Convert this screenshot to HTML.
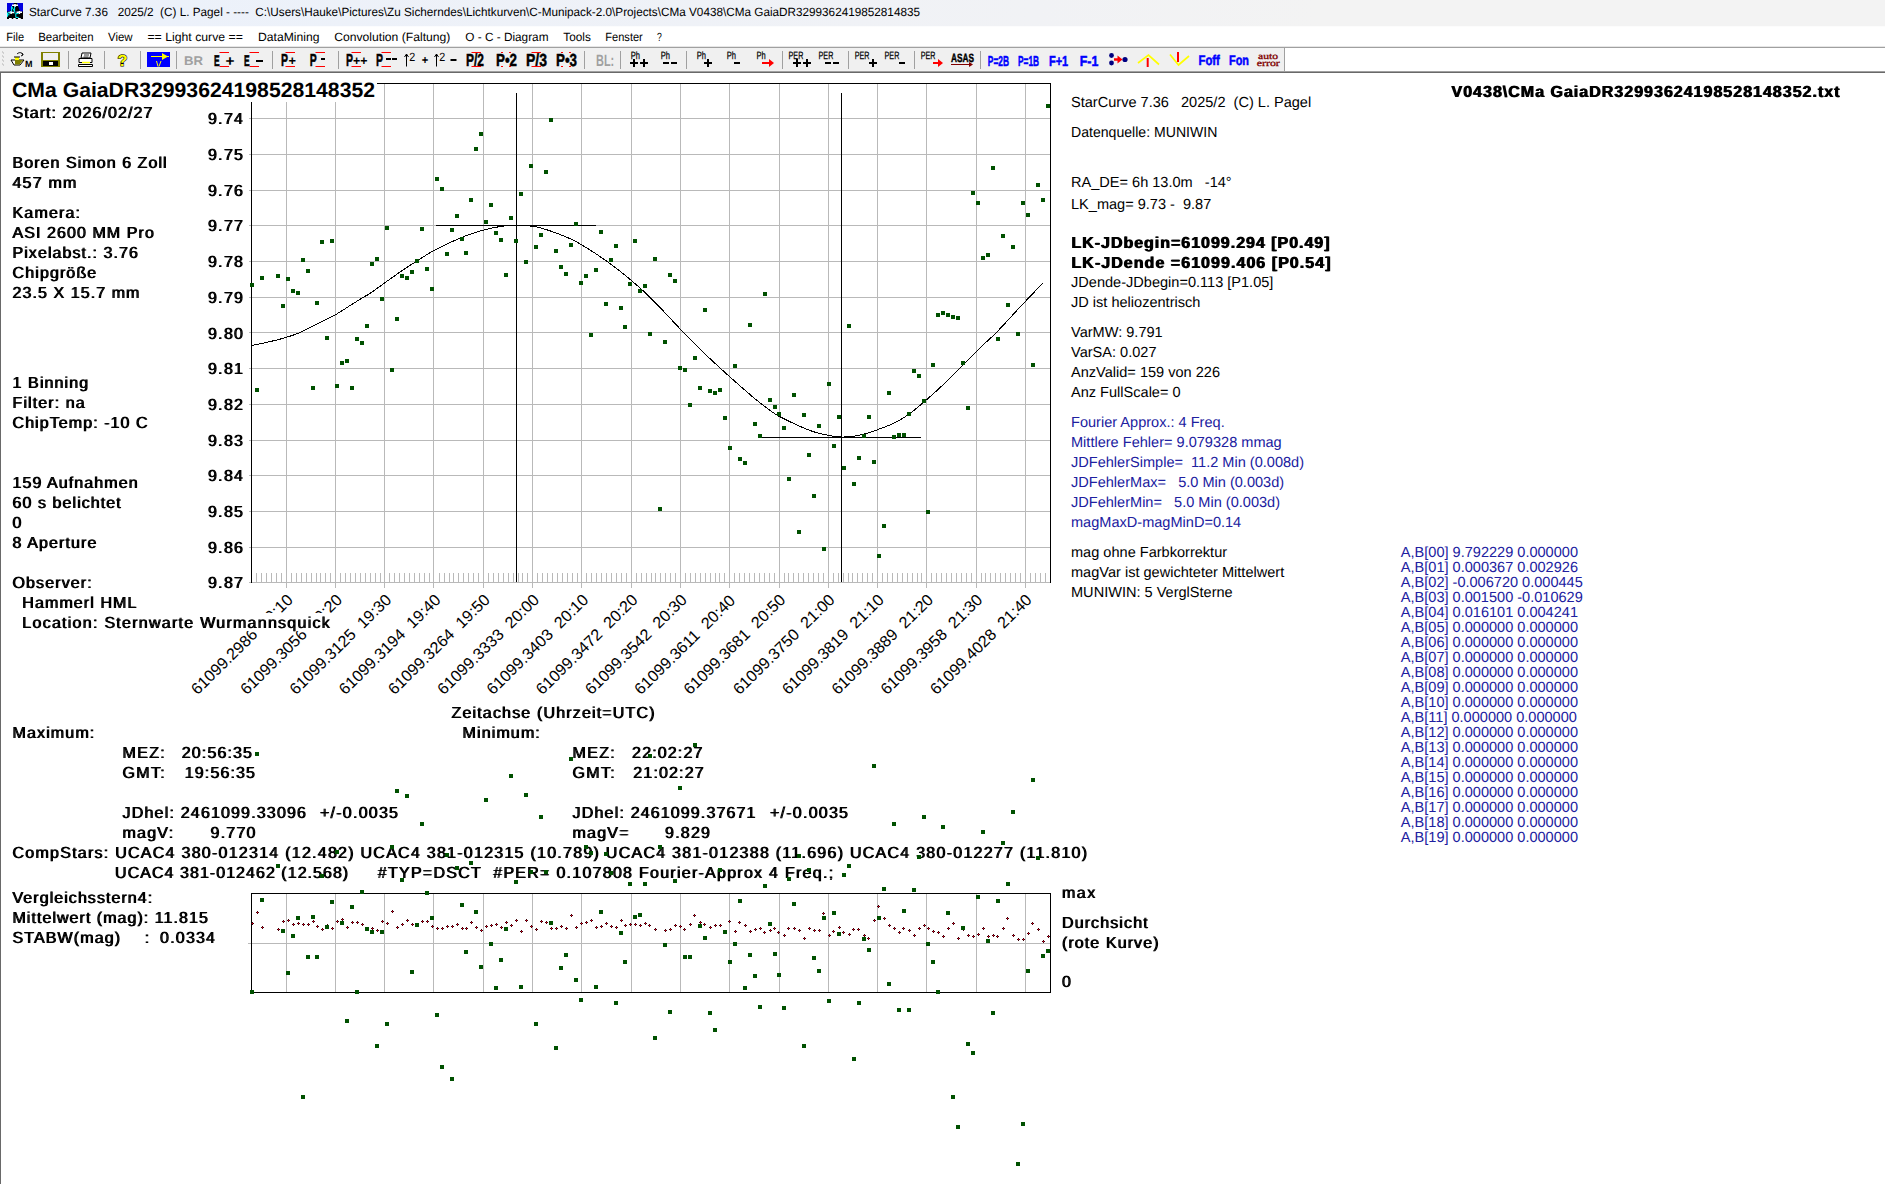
<!DOCTYPE html>
<html><head><meta charset="utf-8"><title>StarCurve</title>
<style>
html,body{margin:0;padding:0;background:#fff}
body{width:1885px;height:1184px;overflow:hidden;position:relative;font-family:"Liberation Sans",sans-serif}
svg text{font-family:"Liberation Sans",sans-serif;white-space:pre}
#main{position:absolute;left:0;top:0}
</style></head><body>
<svg id="main" width="1885" height="1184" viewBox="0 0 1885 1184" shape-rendering="crispEdges" text-rendering="geometricPrecision">
<defs><filter id="fb" filterUnits="userSpaceOnUse" x="0" y="0" width="1885" height="1184"><feOffset dx="0.7" dy="0" result="o"/><feMerge><feMergeNode in="SourceGraphic"/><feMergeNode in="o"/></feMerge></filter></defs>
<g shape-rendering="crispEdges">
<path d="M249 118.5H1050" stroke="#b9b9b9"/>
<path d="M249 154.5H1050" stroke="#b9b9b9"/>
<path d="M249 190.5H1050" stroke="#b9b9b9"/>
<path d="M249 225.5H1050" stroke="#b9b9b9"/>
<path d="M249 261.5H1050" stroke="#b9b9b9"/>
<path d="M249 297.5H1050" stroke="#b9b9b9"/>
<path d="M249 332.5H1050" stroke="#b9b9b9"/>
<path d="M249 368.5H1050" stroke="#b9b9b9"/>
<path d="M249 404.5H1050" stroke="#b9b9b9"/>
<path d="M249 440.5H1050" stroke="#b9b9b9"/>
<path d="M249 475.5H1050" stroke="#b9b9b9"/>
<path d="M249 511.5H1050" stroke="#b9b9b9"/>
<path d="M249 547.5H1050" stroke="#b9b9b9"/>
<path d="M249 582.5H1050" stroke="#b9b9b9"/>
<path d="M286.5 84V588" stroke="#b9b9b9"/>
<path d="M335.5 84V588" stroke="#b9b9b9"/>
<path d="M384.5 84V588" stroke="#b9b9b9"/>
<path d="M433.5 84V588" stroke="#b9b9b9"/>
<path d="M483.5 84V588" stroke="#b9b9b9"/>
<path d="M532.5 84V588" stroke="#b9b9b9"/>
<path d="M581.5 84V588" stroke="#b9b9b9"/>
<path d="M631.5 84V588" stroke="#b9b9b9"/>
<path d="M680.5 84V588" stroke="#b9b9b9"/>
<path d="M729.5 84V588" stroke="#b9b9b9"/>
<path d="M779.5 84V588" stroke="#b9b9b9"/>
<path d="M828.5 84V588" stroke="#b9b9b9"/>
<path d="M877.5 84V588" stroke="#b9b9b9"/>
<path d="M926.5 84V588" stroke="#b9b9b9"/>
<path d="M976.5 84V588" stroke="#b9b9b9"/>
<path d="M1025.5 84V588" stroke="#b9b9b9"/>
<path d="M256.5 573V582M261.5 573V582M266.5 573V582M271.5 573V582M276.5 573V582M281.5 573V582M291.5 573V582M296.5 573V582M301.5 573V582M306.5 573V582M311.5 573V582M316.5 573V582M320.5 573V582M325.5 573V582M330.5 573V582M340.5 573V582M345.5 573V582M350.5 573V582M355.5 573V582M360.5 573V582M365.5 573V582M370.5 573V582M375.5 573V582M380.5 573V582M389.5 573V582M394.5 573V582M399.5 573V582M404.5 573V582M409.5 573V582M414.5 573V582M419.5 573V582M424.5 573V582M429.5 573V582M439.5 573V582M444.5 573V582M449.5 573V582M453.5 573V582M458.5 573V582M463.5 573V582M468.5 573V582M473.5 573V582M478.5 573V582M488.5 573V582M493.5 573V582M498.5 573V582M503.5 573V582M508.5 573V582M513.5 573V582M518.5 573V582M522.5 573V582M527.5 573V582M537.5 573V582M542.5 573V582M547.5 573V582M552.5 573V582M557.5 573V582M562.5 573V582M567.5 573V582M572.5 573V582M577.5 573V582M586.5 573V582M591.5 573V582M596.5 573V582M601.5 573V582M606.5 573V582M611.5 573V582M616.5 573V582M621.5 573V582M626.5 573V582M636.5 573V582M641.5 573V582M646.5 573V582M651.5 573V582M655.5 573V582M660.5 573V582M665.5 573V582M670.5 573V582M675.5 573V582M685.5 573V582M690.5 573V582M695.5 573V582M700.5 573V582M705.5 573V582M710.5 573V582M715.5 573V582M719.5 573V582M724.5 573V582M734.5 573V582M739.5 573V582M744.5 573V582M749.5 573V582M754.5 573V582M759.5 573V582M764.5 573V582M769.5 573V582M774.5 573V582M784.5 573V582M788.5 573V582M793.5 573V582M798.5 573V582M803.5 573V582M808.5 573V582M813.5 573V582M818.5 573V582M823.5 573V582M833.5 573V582M838.5 573V582M843.5 573V582M848.5 573V582M852.5 573V582M857.5 573V582M862.5 573V582M867.5 573V582M872.5 573V582M882.5 573V582M887.5 573V582M892.5 573V582M897.5 573V582M902.5 573V582M907.5 573V582M912.5 573V582M917.5 573V582M921.5 573V582M931.5 573V582M936.5 573V582M941.5 573V582M946.5 573V582M951.5 573V582M956.5 573V582M961.5 573V582M966.5 573V582M971.5 573V582M981.5 573V582M985.5 573V582M990.5 573V582M995.5 573V582M1000.5 573V582M1005.5 573V582M1010.5 573V582M1015.5 573V582M1020.5 573V582M1030.5 573V582M1035.5 573V582M1040.5 573V582M1045.5 573V582" stroke="#b9b9b9"/>
<path d="M251.5 83V583" stroke="#000"/>
<path d="M251 83.5H1051" stroke="#000"/>
<path d="M1050.5 83V583" stroke="#000"/>
<path d="M516.5 93V582M436 225.5H596M841.5 93V582M760 437.5H921" stroke="#000"/>
<path d="M251.6 345.4C254.0 344.9 260.6 343.8 266.2 342.5C271.8 341.2 279.6 339.4 285.3 337.7C291.0 336.0 294.5 334.9 300.2 332.4C305.9 329.9 313.5 325.8 319.3 322.9C325.1 320.0 329.9 317.9 335.2 314.9C340.5 311.9 346.2 308.0 351.1 304.9C356.1 301.8 361.4 298.5 364.9 296.4C368.4 294.3 365.8 296.3 372.0 292.0C378.2 287.8 391.6 277.7 401.9 270.8C412.2 263.9 423.8 256.2 433.8 250.6C443.8 245.1 453.7 240.7 462.0 237.3C470.3 233.8 476.9 231.9 483.4 230.1C489.9 228.3 495.3 227.3 500.8 226.4C506.4 225.6 512.6 225.3 516.7 225.2C520.9 225.0 521.8 225.1 525.9 225.6C529.9 226.1 533.4 225.7 540.9 227.9C548.4 230.2 561.7 234.7 570.8 239.0C580.0 243.3 587.5 248.3 595.9 253.8C604.2 259.3 611.9 264.6 620.9 271.9C629.9 279.1 639.5 287.1 650.0 297.3C660.5 307.5 675.1 323.8 684.0 333.0C692.8 342.1 697.2 346.4 703.1 352.1C708.9 357.8 713.7 362.1 719.0 367.0C724.3 371.8 728.9 376.1 734.9 381.4C740.9 386.7 748.7 393.6 755.0 398.8C761.4 404.0 769.1 409.7 773.1 412.6C777.1 415.5 774.8 414.0 779.0 416.2C783.3 418.4 792.8 423.2 798.5 425.7C804.3 428.3 808.3 430.0 813.4 431.7C818.5 433.3 824.2 434.6 828.9 435.5C833.6 436.4 837.3 436.8 841.4 437.0C845.5 437.1 849.1 437.0 853.7 436.3C858.3 435.6 864.8 433.9 869.0 432.7C873.2 431.5 874.8 430.7 879.0 429.1C883.1 427.5 889.0 425.7 894.0 423.2C899.0 420.7 903.9 417.8 908.9 414.3C913.9 410.7 918.3 406.8 924.0 402.0C929.6 397.1 936.3 391.2 942.8 385.0C949.3 378.8 956.6 371.2 963.0 364.8C969.4 358.5 975.6 352.1 981.0 346.8C986.5 341.5 989.5 339.5 995.9 333.0C1002.3 326.5 1011.4 316.3 1019.2 307.9C1027.1 299.6 1039.0 287.1 1043.0 282.9" stroke="#000" fill="none" stroke-width="1"/>
<path d="M286.5 894V992" stroke="#b9b9b9"/>
<path d="M335.5 894V992" stroke="#b9b9b9"/>
<path d="M384.5 894V992" stroke="#b9b9b9"/>
<path d="M433.5 894V992" stroke="#b9b9b9"/>
<path d="M483.5 894V992" stroke="#b9b9b9"/>
<path d="M532.5 894V992" stroke="#b9b9b9"/>
<path d="M581.5 894V992" stroke="#b9b9b9"/>
<path d="M631.5 894V992" stroke="#b9b9b9"/>
<path d="M680.5 894V992" stroke="#b9b9b9"/>
<path d="M729.5 894V992" stroke="#b9b9b9"/>
<path d="M779.5 894V992" stroke="#b9b9b9"/>
<path d="M828.5 894V992" stroke="#b9b9b9"/>
<path d="M877.5 894V992" stroke="#b9b9b9"/>
<path d="M926.5 894V992" stroke="#b9b9b9"/>
<path d="M976.5 894V992" stroke="#b9b9b9"/>
<path d="M1025.5 894V992" stroke="#b9b9b9"/>
<path d="M248 943.5H1050" stroke="#b9b9b9"/>
<rect x="251.5" y="893.5" width="799" height="99" fill="none" stroke="#000"/>
<text x="197.5" y="695.5" font-size="16" textLength="135.1" lengthAdjust="spacingAndGlyphs" transform="rotate(-44.5 197.5 695.5)">61099.2986  19:10</text>
<text x="246.8" y="695.5" font-size="16" textLength="135.1" lengthAdjust="spacingAndGlyphs" transform="rotate(-44.5 246.8 695.5)">61099.3056  19:20</text>
<text x="296.0" y="695.5" font-size="16" textLength="135.1" lengthAdjust="spacingAndGlyphs" transform="rotate(-44.5 296.0 695.5)">61099.3125  19:30</text>
<text x="345.3" y="695.5" font-size="16" textLength="135.1" lengthAdjust="spacingAndGlyphs" transform="rotate(-44.5 345.3 695.5)">61099.3194  19:40</text>
<text x="394.5" y="695.5" font-size="16" textLength="135.1" lengthAdjust="spacingAndGlyphs" transform="rotate(-44.5 394.5 695.5)">61099.3264  19:50</text>
<text x="443.8" y="695.5" font-size="16" textLength="135.1" lengthAdjust="spacingAndGlyphs" transform="rotate(-44.5 443.8 695.5)">61099.3333  20:00</text>
<text x="493.1" y="695.5" font-size="16" textLength="135.1" lengthAdjust="spacingAndGlyphs" transform="rotate(-44.5 493.1 695.5)">61099.3403  20:10</text>
<text x="542.3" y="695.5" font-size="16" textLength="135.1" lengthAdjust="spacingAndGlyphs" transform="rotate(-44.5 542.3 695.5)">61099.3472  20:20</text>
<text x="591.6" y="695.5" font-size="16" textLength="135.1" lengthAdjust="spacingAndGlyphs" transform="rotate(-44.5 591.6 695.5)">61099.3542  20:30</text>
<text x="640.8" y="695.5" font-size="16" textLength="133.9" lengthAdjust="spacingAndGlyphs" transform="rotate(-44.5 640.8 695.5)">61099.3611  20:40</text>
<text x="690.1" y="695.5" font-size="16" textLength="135.1" lengthAdjust="spacingAndGlyphs" transform="rotate(-44.5 690.1 695.5)">61099.3681  20:50</text>
<text x="739.4" y="695.5" font-size="16" textLength="135.1" lengthAdjust="spacingAndGlyphs" transform="rotate(-44.5 739.4 695.5)">61099.3750  21:00</text>
<text x="788.6" y="695.5" font-size="16" textLength="135.1" lengthAdjust="spacingAndGlyphs" transform="rotate(-44.5 788.6 695.5)">61099.3819  21:10</text>
<text x="837.9" y="695.5" font-size="16" textLength="135.1" lengthAdjust="spacingAndGlyphs" transform="rotate(-44.5 837.9 695.5)">61099.3889  21:20</text>
<text x="887.1" y="695.5" font-size="16" textLength="135.1" lengthAdjust="spacingAndGlyphs" transform="rotate(-44.5 887.1 695.5)">61099.3958  21:30</text>
<text x="936.4" y="695.5" font-size="16" textLength="135.1" lengthAdjust="spacingAndGlyphs" transform="rotate(-44.5 936.4 695.5)">61099.4028  21:40</text>
<rect x="12" y="573" width="88" height="20" fill="#fff"/>
<rect x="21" y="593" width="120" height="20" fill="#fff"/>
<rect x="21" y="613" width="310" height="17.5" fill="#fff"/>
<rect x="12" y="76" width="365" height="26" fill="#fff"/>
<text x="12.0" y="97.0" font-size="20.7" textLength="363.0" lengthAdjust="spacingAndGlyphs" font-weight="bold">CMa GaiaDR32993624198528148352</text>
<text x="1071.0" y="107.0" font-size="14.6" textLength="240.2" lengthAdjust="spacingAndGlyphs">StarCurve 7.36   2025/2  (C) L. Pagel</text>
<text x="1071.0" y="137.0" font-size="14.6" textLength="146.4" lengthAdjust="spacingAndGlyphs">Datenquelle: MUNIWIN</text>
<text x="1071.0" y="187.0" font-size="14.6" textLength="160.7" lengthAdjust="spacingAndGlyphs">RA_DE= 6h 13.0m   -14°</text>
<text x="1071.0" y="208.5" font-size="14.6" textLength="140.3" lengthAdjust="spacingAndGlyphs">LK_mag= 9.73 -  9.87</text>
<text x="1071.0" y="287.0" font-size="14.6" textLength="202.4" lengthAdjust="spacingAndGlyphs">JDende-JDbegin=0.113 [P1.05]</text>
<text x="1071.0" y="307.0" font-size="14.6" textLength="129.4" lengthAdjust="spacingAndGlyphs">JD ist heliozentrisch</text>
<text x="1071.0" y="337.0" font-size="14.6" textLength="91.7" lengthAdjust="spacingAndGlyphs">VarMW: 9.791</text>
<text x="1071.0" y="357.0" font-size="14.6" textLength="85.5" lengthAdjust="spacingAndGlyphs">VarSA: 0.027</text>
<text x="1071.0" y="377.0" font-size="14.6" textLength="149.0" lengthAdjust="spacingAndGlyphs">AnzValid= 159 von 226</text>
<text x="1071.0" y="397.0" font-size="14.6" textLength="109.6" lengthAdjust="spacingAndGlyphs">Anz FullScale= 0</text>
<text x="1071.0" y="557.0" font-size="14.6" textLength="156.1" lengthAdjust="spacingAndGlyphs">mag ohne Farbkorrektur</text>
<text x="1071.0" y="577.0" font-size="14.6" textLength="213.2" lengthAdjust="spacingAndGlyphs">magVar ist gewichteter Mittelwert</text>
<text x="1071.0" y="597.0" font-size="14.6" textLength="161.7" lengthAdjust="spacingAndGlyphs">MUNIWIN: 5 VerglSterne</text>
<text x="1071.0" y="427.0" font-size="14.6" textLength="153.7" lengthAdjust="spacingAndGlyphs" fill="#2020a0">Fourier Approx.: 4 Freq.</text>
<text x="1071.0" y="447.0" font-size="14.6" textLength="210.7" lengthAdjust="spacingAndGlyphs" fill="#2020a0">Mittlere Fehler= 9.079328 mmag</text>
<text x="1071.0" y="467.0" font-size="14.6" textLength="233.0" lengthAdjust="spacingAndGlyphs" fill="#2020a0">JDFehlerSimple=  11.2 Min (0.008d)</text>
<text x="1071.0" y="487.0" font-size="14.6" textLength="213.1" lengthAdjust="spacingAndGlyphs" fill="#2020a0">JDFehlerMax=   5.0 Min (0.003d)</text>
<text x="1071.0" y="507.0" font-size="14.6" textLength="209.0" lengthAdjust="spacingAndGlyphs" fill="#2020a0">JDFehlerMin=   5.0 Min (0.003d)</text>
<text x="1071.0" y="527.0" font-size="14.6" textLength="170.2" lengthAdjust="spacingAndGlyphs" fill="#2020a0">magMaxD-magMinD=0.14</text>
<text x="1400.8" y="557.0" font-size="14.6" textLength="177.2" lengthAdjust="spacingAndGlyphs" fill="#2020a0">A,B[00] 9.792229 0.000000</text>
<text x="1400.8" y="572.0" font-size="14.6" textLength="177.2" lengthAdjust="spacingAndGlyphs" fill="#2020a0">A,B[01] 0.000367 0.002926</text>
<text x="1400.8" y="587.0" font-size="14.6" textLength="182.0" lengthAdjust="spacingAndGlyphs" fill="#2020a0">A,B[02] -0.006720 0.000445</text>
<text x="1400.8" y="602.0" font-size="14.6" textLength="182.0" lengthAdjust="spacingAndGlyphs" fill="#2020a0">A,B[03] 0.001500 -0.010629</text>
<text x="1400.8" y="617.0" font-size="14.6" textLength="177.2" lengthAdjust="spacingAndGlyphs" fill="#2020a0">A,B[04] 0.016101 0.004241</text>
<text x="1400.8" y="632.0" font-size="14.6" textLength="177.2" lengthAdjust="spacingAndGlyphs" fill="#2020a0">A,B[05] 0.000000 0.000000</text>
<text x="1400.8" y="647.0" font-size="14.6" textLength="177.2" lengthAdjust="spacingAndGlyphs" fill="#2020a0">A,B[06] 0.000000 0.000000</text>
<text x="1400.8" y="662.0" font-size="14.6" textLength="177.2" lengthAdjust="spacingAndGlyphs" fill="#2020a0">A,B[07] 0.000000 0.000000</text>
<text x="1400.8" y="677.0" font-size="14.6" textLength="177.2" lengthAdjust="spacingAndGlyphs" fill="#2020a0">A,B[08] 0.000000 0.000000</text>
<text x="1400.8" y="692.0" font-size="14.6" textLength="177.2" lengthAdjust="spacingAndGlyphs" fill="#2020a0">A,B[09] 0.000000 0.000000</text>
<text x="1400.8" y="707.0" font-size="14.6" textLength="177.2" lengthAdjust="spacingAndGlyphs" fill="#2020a0">A,B[10] 0.000000 0.000000</text>
<text x="1400.8" y="722.0" font-size="14.6" textLength="176.1" lengthAdjust="spacingAndGlyphs" fill="#2020a0">A,B[11] 0.000000 0.000000</text>
<text x="1400.8" y="737.0" font-size="14.6" textLength="177.2" lengthAdjust="spacingAndGlyphs" fill="#2020a0">A,B[12] 0.000000 0.000000</text>
<text x="1400.8" y="752.0" font-size="14.6" textLength="177.2" lengthAdjust="spacingAndGlyphs" fill="#2020a0">A,B[13] 0.000000 0.000000</text>
<text x="1400.8" y="767.0" font-size="14.6" textLength="177.2" lengthAdjust="spacingAndGlyphs" fill="#2020a0">A,B[14] 0.000000 0.000000</text>
<text x="1400.8" y="782.0" font-size="14.6" textLength="177.2" lengthAdjust="spacingAndGlyphs" fill="#2020a0">A,B[15] 0.000000 0.000000</text>
<text x="1400.8" y="797.0" font-size="14.6" textLength="177.2" lengthAdjust="spacingAndGlyphs" fill="#2020a0">A,B[16] 0.000000 0.000000</text>
<text x="1400.8" y="812.0" font-size="14.6" textLength="177.2" lengthAdjust="spacingAndGlyphs" fill="#2020a0">A,B[17] 0.000000 0.000000</text>
<text x="1400.8" y="827.0" font-size="14.6" textLength="177.2" lengthAdjust="spacingAndGlyphs" fill="#2020a0">A,B[18] 0.000000 0.000000</text>
<text x="1400.8" y="842.0" font-size="14.6" textLength="177.2" lengthAdjust="spacingAndGlyphs" fill="#2020a0">A,B[19] 0.000000 0.000000</text>
<g filter="url(#fb)">
<text x="1451.0" y="97.0" font-size="16" textLength="388.0" lengthAdjust="spacing" font-weight="bold">V0438\CMa GaiaDR32993624198528148352.txt</text>
<text x="12.0" y="118.0" font-size="16" textLength="139.8" lengthAdjust="spacing">Start: 2026/02/27</text>
<text x="12.0" y="168.0" font-size="16" textLength="154.1" lengthAdjust="spacing">Boren Simon 6 Zoll</text>
<text x="12.0" y="188.0" font-size="16" textLength="63.8" lengthAdjust="spacing">457 mm</text>
<text x="12.0" y="218.0" font-size="16" textLength="67.5" lengthAdjust="spacing">Kamera:</text>
<text x="12.0" y="238.0" font-size="16" textLength="141.3" lengthAdjust="spacing">ASI 2600 MM Pro</text>
<text x="12.0" y="258.0" font-size="16" textLength="125.4" lengthAdjust="spacing">Pixelabst.: 3.76</text>
<text x="12.0" y="278.0" font-size="16" textLength="83.7" lengthAdjust="spacing">Chipgröße</text>
<text x="12.0" y="298.0" font-size="16" textLength="126.9" lengthAdjust="spacing">23.5 X 15.7 mm</text>
<text x="12.0" y="388.0" font-size="16" textLength="75.7" lengthAdjust="spacing">1 Binning</text>
<text x="12.0" y="408.0" font-size="16" textLength="72.2" lengthAdjust="spacing">Filter: na</text>
<text x="12.0" y="428.0" font-size="16" textLength="135.1" lengthAdjust="spacing">ChipTemp: -10 C</text>
<text x="12.0" y="488.0" font-size="16" textLength="125.1" lengthAdjust="spacing">159 Aufnahmen</text>
<text x="12.0" y="508.0" font-size="16" textLength="108.3" lengthAdjust="spacing">60 s belichtet</text>
<text x="12.0" y="528.0" font-size="16" textLength="9.9" lengthAdjust="spacing">0</text>
<text x="12.0" y="548.0" font-size="16" textLength="83.8" lengthAdjust="spacing">8 Aperture</text>
<text x="12.0" y="588.0" font-size="16" textLength="79.2" lengthAdjust="spacing">Observer:</text>
<text x="21.8" y="608.0" font-size="16" textLength="114.1" lengthAdjust="spacing">Hammerl HML</text>
<text x="21.8" y="628.0" font-size="16" textLength="307.5" lengthAdjust="spacing">Location: Sternwarte Wurmannsquick</text>
<text x="451.0" y="718.0" font-size="16" textLength="203.0" lengthAdjust="spacing">Zeitachse (Uhrzeit=UTC)</text>
<text x="12.0" y="738.0" font-size="16" textLength="81.8" lengthAdjust="spacing">Maximum:</text>
<text x="462.0" y="738.0" font-size="16" textLength="77.3" lengthAdjust="spacing">Minimum:</text>
<text x="122.0" y="758.0" font-size="16" textLength="42.2" lengthAdjust="spacing">MEZ:</text>
<text x="181.2" y="758.0" font-size="16" textLength="70.3" lengthAdjust="spacing">20:56:35</text>
<text x="122.0" y="778.0" font-size="16" textLength="42.2" lengthAdjust="spacing">GMT:</text>
<text x="184.2" y="778.0" font-size="16" textLength="70.3" lengthAdjust="spacing">19:56:35</text>
<text x="122.0" y="818.0" font-size="16" textLength="51.4" lengthAdjust="spacing">JDhel:</text>
<text x="180.3" y="818.0" font-size="16" textLength="125.1" lengthAdjust="spacing">2461099.33096</text>
<text x="319.4" y="818.0" font-size="16" textLength="78.1" lengthAdjust="spacing">+/-0.0035</text>
<text x="122.0" y="838.0" font-size="16" textLength="50.6" lengthAdjust="spacing">magV:</text>
<text x="210.0" y="838.0" font-size="16" textLength="45.0" lengthAdjust="spacing">9.770</text>
<text x="572.0" y="758.0" font-size="16" textLength="42.2" lengthAdjust="spacing">MEZ:</text>
<text x="631.6" y="758.0" font-size="16" textLength="70.3" lengthAdjust="spacing">22:02:27</text>
<text x="572.0" y="778.0" font-size="16" textLength="42.2" lengthAdjust="spacing">GMT:</text>
<text x="632.8" y="778.0" font-size="16" textLength="70.3" lengthAdjust="spacing">21:02:27</text>
<text x="572.0" y="818.0" font-size="16" textLength="51.4" lengthAdjust="spacing">JDhel:</text>
<text x="630.3" y="818.0" font-size="16" textLength="124.5" lengthAdjust="spacing">2461099.37671</text>
<text x="769.4" y="818.0" font-size="16" textLength="78.1" lengthAdjust="spacing">+/-0.0035</text>
<text x="572.0" y="838.0" font-size="16" textLength="56.1" lengthAdjust="spacing">magV=</text>
<text x="664.5" y="838.0" font-size="16" textLength="45.0" lengthAdjust="spacing">9.829</text>
<text x="12.0" y="858.0" font-size="16" textLength="1074.6" lengthAdjust="spacing">CompStars: UCAC4 380-012314 (12.482) UCAC4 381-012315 (10.789) UCAC4 381-012388 (11.696) UCAC4 380-012277 (11.810)</text>
<text x="114.6" y="878.0" font-size="16" textLength="233.1" lengthAdjust="spacing">UCAC4 381-012462 (12.568)</text>
<text x="377.3" y="878.0" font-size="16" textLength="455.3" lengthAdjust="spacing">#TYP=DSCT  #PER= 0.107808 Fourier-Approx 4 Freq.;</text>
<text x="12.0" y="903.0" font-size="16" textLength="139.7" lengthAdjust="spacing">Vergleichsstern4:</text>
<text x="12.0" y="923.0" font-size="16" textLength="195.3" lengthAdjust="spacing">Mittelwert (mag): 11.815</text>
<text x="12.0" y="943.0" font-size="16" textLength="107.5" lengthAdjust="spacing">STABW(mag)</text>
<text x="144.3" y="943.0" font-size="16" textLength="5.4" lengthAdjust="spacing">:</text>
<text x="159.6" y="943.0" font-size="16" textLength="54.9" lengthAdjust="spacing">0.0334</text>
<text x="1061.5" y="898.0" font-size="16" textLength="33.2" lengthAdjust="spacing">max</text>
<text x="1061.5" y="928.0" font-size="16" textLength="85.6" lengthAdjust="spacing">Durchsicht</text>
<text x="1061.5" y="948.0" font-size="16" textLength="96.5" lengthAdjust="spacing">(rote Kurve)</text>
<text x="1061.5" y="987.0" font-size="16" textLength="9.9" lengthAdjust="spacing">0</text>
<text x="207.4" y="124.3" font-size="16" textLength="35.1" lengthAdjust="spacing">9.74</text>
<text x="207.4" y="160.0" font-size="16" textLength="35.1" lengthAdjust="spacing">9.75</text>
<text x="207.4" y="195.7" font-size="16" textLength="35.1" lengthAdjust="spacing">9.76</text>
<text x="207.4" y="231.4" font-size="16" textLength="35.1" lengthAdjust="spacing">9.77</text>
<text x="207.4" y="267.1" font-size="16" textLength="35.1" lengthAdjust="spacing">9.78</text>
<text x="207.4" y="302.8" font-size="16" textLength="35.1" lengthAdjust="spacing">9.79</text>
<text x="207.4" y="338.5" font-size="16" textLength="35.1" lengthAdjust="spacing">9.80</text>
<text x="207.4" y="374.2" font-size="16" textLength="35.1" lengthAdjust="spacing">9.81</text>
<text x="207.4" y="409.9" font-size="16" textLength="35.1" lengthAdjust="spacing">9.82</text>
<text x="207.4" y="445.6" font-size="16" textLength="35.1" lengthAdjust="spacing">9.83</text>
<text x="207.4" y="481.3" font-size="16" textLength="35.1" lengthAdjust="spacing">9.84</text>
<text x="207.4" y="517.0" font-size="16" textLength="35.1" lengthAdjust="spacing">9.85</text>
<text x="207.4" y="552.7" font-size="16" textLength="35.1" lengthAdjust="spacing">9.86</text>
<text x="207.4" y="588.4" font-size="16" textLength="35.1" lengthAdjust="spacing">9.87</text>
<text x="1071.0" y="248.0" font-size="16" textLength="258.0" lengthAdjust="spacing" font-weight="bold">LK-JDbegin=61099.294 [P0.49]</text>
<text x="1071.0" y="267.5" font-size="16" textLength="259.0" lengthAdjust="spacing" font-weight="bold">LK-JDende =61099.406 [P0.54]</text>
</g>
<path d="M250 283h4v4h-4zM260 276h4v4h-4zM276 274h4v4h-4zM281 304h4v4h-4zM286 277h4v4h-4zM291 289h4v4h-4zM296 291h4v4h-4zM301 258h4v4h-4zM306 269h4v4h-4zM315 301h4v4h-4zM320 240h4v4h-4zM330 239h4v4h-4zM365 324h4v4h-4zM370 262h4v4h-4zM375 257h4v4h-4zM380 297h4v4h-4zM385 226h4v4h-4zM395 317h4v4h-4zM400 274h4v4h-4zM405 276h4v4h-4zM410 270h4v4h-4zM415 259h4v4h-4zM420 227h4v4h-4zM425 267h4v4h-4zM430 287h4v4h-4zM435 177h4v4h-4zM440 187h4v4h-4zM445 252h4v4h-4zM450 228h4v4h-4zM455 214h4v4h-4zM460 237h4v4h-4zM464 251h4v4h-4zM469 198h4v4h-4zM474 147h4v4h-4zM479 132h4v4h-4zM484 220h4v4h-4zM489 203h4v4h-4zM494 231h4v4h-4zM499 238h4v4h-4zM504 273h4v4h-4zM509 216h4v4h-4zM514 239h4v4h-4zM519 192h4v4h-4zM524 260h4v4h-4zM529 164h4v4h-4zM534 245h4v4h-4zM539 233h4v4h-4zM544 170h4v4h-4zM549 118h4v4h-4zM554 249h4v4h-4zM559 265h4v4h-4zM564 272h4v4h-4zM569 243h4v4h-4zM574 222h4v4h-4zM579 281h4v4h-4zM584 274h4v4h-4zM594 268h4v4h-4zM599 230h4v4h-4zM604 302h4v4h-4zM609 258h4v4h-4zM614 244h4v4h-4zM619 306h4v4h-4zM623 325h4v4h-4zM628 282h4v4h-4zM633 239h4v4h-4zM638 289h4v4h-4zM643 284h4v4h-4zM255 388h4v4h-4zM311 386h4v4h-4zM325 336h4v4h-4zM335 384h4v4h-4zM340 361h4v4h-4zM345 359h4v4h-4zM350 386h4v4h-4zM355 337h4v4h-4zM360 341h4v4h-4zM390 368h4v4h-4zM589 333h4v4h-4zM648 332h4v4h-4zM653 257h4v4h-4zM668 273h4v4h-4zM673 279h4v4h-4zM703 308h4v4h-4zM748 323h4v4h-4zM763 292h4v4h-4zM847 324h4v4h-4zM936 313h4v4h-4zM941 311h4v4h-4zM946 313h4v4h-4zM951 315h4v4h-4zM956 316h4v4h-4zM971 191h4v4h-4zM976 201h4v4h-4zM981 256h4v4h-4zM986 253h4v4h-4zM991 166h4v4h-4zM1001 234h4v4h-4zM1006 303h4v4h-4zM1011 245h4v4h-4zM1021 201h4v4h-4zM1026 213h4v4h-4zM1036 183h4v4h-4zM1041 198h4v4h-4zM1046 104h4v4h-4zM658 507h4v4h-4zM663 340h4v4h-4zM678 366h4v4h-4zM683 368h4v4h-4zM688 403h4v4h-4zM693 356h4v4h-4zM698 386h4v4h-4zM708 389h4v4h-4zM713 391h4v4h-4zM718 388h4v4h-4zM723 416h4v4h-4zM728 446h4v4h-4zM733 364h4v4h-4zM738 457h4v4h-4zM743 461h4v4h-4zM753 422h4v4h-4zM758 434h4v4h-4zM768 398h4v4h-4zM773 405h4v4h-4zM777 412h4v4h-4zM782 426h4v4h-4zM787 477h4v4h-4zM792 393h4v4h-4zM797 530h4v4h-4zM802 413h4v4h-4zM807 453h4v4h-4zM812 494h4v4h-4zM817 424h4v4h-4zM822 547h4v4h-4zM827 382h4v4h-4zM832 444h4v4h-4zM837 415h4v4h-4zM842 466h4v4h-4zM852 482h4v4h-4zM857 456h4v4h-4zM862 434h4v4h-4zM867 415h4v4h-4zM872 460h4v4h-4zM877 554h4v4h-4zM882 524h4v4h-4zM887 391h4v4h-4zM892 435h4v4h-4zM897 433h4v4h-4zM902 433h4v4h-4zM907 412h4v4h-4zM912 369h4v4h-4zM917 374h4v4h-4zM922 399h4v4h-4zM926 510h4v4h-4zM931 363h4v4h-4zM961 361h4v4h-4zM966 406h4v4h-4zM996 337h4v4h-4zM1016 332h4v4h-4zM1031 363h4v4h-4z" fill="#005000"/>
<path d="M251 923h3v1h-3zM252 922h1v3h-1zM256 912h3v1h-3zM257 911h1v3h-1zM261 927h3v1h-3zM262 926h1v3h-1zM277 929h3v1h-3zM278 928h1v3h-1zM282 921h3v1h-3zM283 920h1v3h-1zM287 920h3v1h-3zM288 919h1v3h-1zM292 924h3v1h-3zM293 923h1v3h-1zM297 923h3v1h-3zM298 922h1v3h-1zM302 924h3v1h-3zM303 923h1v3h-1zM307 924h3v1h-3zM308 923h1v3h-1zM312 921h3v1h-3zM313 920h1v3h-1zM316 926h3v1h-3zM317 925h1v3h-1zM321 929h3v1h-3zM322 928h1v3h-1zM326 925h3v1h-3zM327 924h1v3h-1zM331 928h3v1h-3zM332 927h1v3h-1zM336 921h3v1h-3zM337 920h1v3h-1zM341 919h3v1h-3zM342 918h1v3h-1zM346 927h3v1h-3zM347 926h1v3h-1zM351 922h3v1h-3zM352 921h1v3h-1zM356 922h3v1h-3zM357 921h1v3h-1zM361 924h3v1h-3zM362 923h1v3h-1zM366 928h3v1h-3zM367 927h1v3h-1zM371 928h3v1h-3zM372 927h1v3h-1zM376 930h3v1h-3zM377 929h1v3h-1zM381 921h3v1h-3zM382 920h1v3h-1zM386 923h3v1h-3zM387 922h1v3h-1zM391 911h3v1h-3zM392 910h1v3h-1zM396 927h3v1h-3zM397 926h1v3h-1zM401 924h3v1h-3zM402 923h1v3h-1zM406 920h3v1h-3zM407 919h1v3h-1zM411 924h3v1h-3zM412 923h1v3h-1zM416 924h3v1h-3zM417 923h1v3h-1zM421 921h3v1h-3zM422 920h1v3h-1zM426 921h3v1h-3zM427 920h1v3h-1zM431 926h3v1h-3zM432 925h1v3h-1zM436 928h3v1h-3zM437 927h1v3h-1zM441 928h3v1h-3zM442 927h1v3h-1zM446 926h3v1h-3zM447 925h1v3h-1zM451 926h3v1h-3zM452 925h1v3h-1zM456 924h3v1h-3zM457 923h1v3h-1zM461 928h3v1h-3zM462 927h1v3h-1zM465 928h3v1h-3zM466 927h1v3h-1zM470 922h3v1h-3zM471 921h1v3h-1zM475 927h3v1h-3zM476 926h1v3h-1zM480 930h3v1h-3zM481 929h1v3h-1zM485 926h3v1h-3zM486 925h1v3h-1zM490 925h3v1h-3zM491 924h1v3h-1zM495 924h3v1h-3zM496 923h1v3h-1zM500 927h3v1h-3zM501 926h1v3h-1zM505 922h3v1h-3zM506 921h1v3h-1zM510 925h3v1h-3zM511 924h1v3h-1zM515 920h3v1h-3zM516 919h1v3h-1zM520 931h3v1h-3zM521 930h1v3h-1zM525 920h3v1h-3zM526 919h1v3h-1zM530 926h3v1h-3zM531 925h1v3h-1zM535 929h3v1h-3zM536 928h1v3h-1zM540 921h3v1h-3zM541 920h1v3h-1zM545 922h3v1h-3zM546 921h1v3h-1zM550 928h3v1h-3zM551 927h1v3h-1zM555 928h3v1h-3zM556 927h1v3h-1zM560 926h3v1h-3zM561 925h1v3h-1zM565 928h3v1h-3zM566 927h1v3h-1zM570 915h3v1h-3zM571 914h1v3h-1zM575 927h3v1h-3zM576 926h1v3h-1zM580 923h3v1h-3zM581 922h1v3h-1zM585 922h3v1h-3zM586 921h1v3h-1zM590 920h3v1h-3zM591 919h1v3h-1zM595 927h3v1h-3zM596 926h1v3h-1zM600 926h3v1h-3zM601 925h1v3h-1zM605 923h3v1h-3zM606 922h1v3h-1zM610 926h3v1h-3zM611 925h1v3h-1zM615 927h3v1h-3zM616 926h1v3h-1zM620 920h3v1h-3zM621 919h1v3h-1zM624 925h3v1h-3zM625 924h1v3h-1zM629 924h3v1h-3zM630 923h1v3h-1zM634 924h3v1h-3zM635 923h1v3h-1zM639 925h3v1h-3zM640 924h1v3h-1zM644 923h3v1h-3zM645 922h1v3h-1zM648 925h3v1h-3zM649 924h1v3h-1zM654 929h3v1h-3zM655 928h1v3h-1zM664 930h3v1h-3zM665 929h1v3h-1zM669 929h3v1h-3zM670 928h1v3h-1zM674 925h3v1h-3zM675 924h1v3h-1zM679 926h3v1h-3zM680 925h1v3h-1zM683 929h3v1h-3zM684 928h1v3h-1zM689 924h3v1h-3zM690 923h1v3h-1zM693 915h3v1h-3zM694 914h1v3h-1zM699 922h3v1h-3zM700 921h1v3h-1zM703 924h3v1h-3zM704 923h1v3h-1zM709 927h3v1h-3zM710 926h1v3h-1zM714 925h3v1h-3zM715 924h1v3h-1zM719 925h3v1h-3zM720 924h1v3h-1zM724 932h3v1h-3zM725 931h1v3h-1zM728 921h3v1h-3zM729 920h1v3h-1zM734 931h3v1h-3zM735 930h1v3h-1zM738 922h3v1h-3zM739 921h1v3h-1zM744 925h3v1h-3zM745 924h1v3h-1zM749 931h3v1h-3zM750 930h1v3h-1zM754 929h3v1h-3zM755 928h1v3h-1zM759 928h3v1h-3zM760 927h1v3h-1zM763 932h3v1h-3zM764 931h1v3h-1zM769 930h3v1h-3zM770 929h1v3h-1zM773 928h3v1h-3zM774 927h1v3h-1zM777 932h3v1h-3zM778 931h1v3h-1zM783 935h3v1h-3zM784 934h1v3h-1zM787 928h3v1h-3zM788 927h1v3h-1zM793 928h3v1h-3zM794 927h1v3h-1zM798 930h3v1h-3zM799 929h1v3h-1zM803 938h3v1h-3zM804 937h1v3h-1zM808 928h3v1h-3zM809 927h1v3h-1zM813 930h3v1h-3zM814 929h1v3h-1zM818 930h3v1h-3zM819 929h1v3h-1zM822 913h3v1h-3zM823 912h1v3h-1zM828 935h3v1h-3zM829 934h1v3h-1zM832 931h3v1h-3zM833 930h1v3h-1zM838 927h3v1h-3zM839 926h1v3h-1zM842 932h3v1h-3zM843 931h1v3h-1zM848 934h3v1h-3zM849 933h1v3h-1zM852 929h3v1h-3zM853 928h1v3h-1zM857 929h3v1h-3zM858 928h1v3h-1zM863 935h3v1h-3zM864 934h1v3h-1zM867 938h3v1h-3zM868 937h1v3h-1zM873 920h3v1h-3zM874 919h1v3h-1zM877 906h3v1h-3zM878 905h1v3h-1zM883 918h3v1h-3zM884 917h1v3h-1zM888 925h3v1h-3zM889 924h1v3h-1zM893 928h3v1h-3zM894 927h1v3h-1zM898 932h3v1h-3zM899 931h1v3h-1zM902 928h3v1h-3zM903 927h1v3h-1zM908 930h3v1h-3zM909 929h1v3h-1zM913 935h3v1h-3zM914 934h1v3h-1zM918 928h3v1h-3zM919 927h1v3h-1zM923 925h3v1h-3zM924 924h1v3h-1zM927 928h3v1h-3zM928 927h1v3h-1zM932 931h3v1h-3zM933 930h1v3h-1zM937 932h3v1h-3zM938 931h1v3h-1zM942 936h3v1h-3zM943 935h1v3h-1zM947 928h3v1h-3zM948 927h1v3h-1zM952 923h3v1h-3zM953 922h1v3h-1zM957 938h3v1h-3zM958 937h1v3h-1zM962 929h3v1h-3zM963 928h1v3h-1zM967 935h3v1h-3zM968 934h1v3h-1zM972 936h3v1h-3zM973 935h1v3h-1zM977 934h3v1h-3zM978 933h1v3h-1zM982 928h3v1h-3zM983 927h1v3h-1zM987 936h3v1h-3zM988 935h1v3h-1zM992 935h3v1h-3zM993 934h1v3h-1zM996 936h3v1h-3zM997 935h1v3h-1zM1002 928h3v1h-3zM1003 927h1v3h-1zM1006 918h3v1h-3zM1007 917h1v3h-1zM1012 935h3v1h-3zM1013 934h1v3h-1zM1017 939h3v1h-3zM1018 938h1v3h-1zM1022 939h3v1h-3zM1023 938h1v3h-1zM1027 933h3v1h-3zM1028 932h1v3h-1zM1031 923h3v1h-3zM1032 922h1v3h-1zM1037 929h3v1h-3zM1038 928h1v3h-1zM1042 941h3v1h-3zM1043 940h1v3h-1zM1047 936h3v1h-3zM1048 935h1v3h-1z" fill="#3c0008"/>
<path d="M252 923h1v1h-1zM257 912h1v1h-1zM262 927h1v1h-1zM278 929h1v1h-1zM283 921h1v1h-1zM288 920h1v1h-1zM293 924h1v1h-1zM298 923h1v1h-1zM303 924h1v1h-1zM308 924h1v1h-1zM313 921h1v1h-1zM317 926h1v1h-1zM322 929h1v1h-1zM327 925h1v1h-1zM332 928h1v1h-1zM337 921h1v1h-1zM342 919h1v1h-1zM347 927h1v1h-1zM352 922h1v1h-1zM357 922h1v1h-1zM362 924h1v1h-1zM367 928h1v1h-1zM372 928h1v1h-1zM377 930h1v1h-1zM382 921h1v1h-1zM387 923h1v1h-1zM392 911h1v1h-1zM397 927h1v1h-1zM402 924h1v1h-1zM407 920h1v1h-1zM412 924h1v1h-1zM417 924h1v1h-1zM422 921h1v1h-1zM427 921h1v1h-1zM432 926h1v1h-1zM437 928h1v1h-1zM442 928h1v1h-1zM447 926h1v1h-1zM452 926h1v1h-1zM457 924h1v1h-1zM462 928h1v1h-1zM466 928h1v1h-1zM471 922h1v1h-1zM476 927h1v1h-1zM481 930h1v1h-1zM486 926h1v1h-1zM491 925h1v1h-1zM496 924h1v1h-1zM501 927h1v1h-1zM506 922h1v1h-1zM511 925h1v1h-1zM516 920h1v1h-1zM521 931h1v1h-1zM526 920h1v1h-1zM531 926h1v1h-1zM536 929h1v1h-1zM541 921h1v1h-1zM546 922h1v1h-1zM551 928h1v1h-1zM556 928h1v1h-1zM561 926h1v1h-1zM566 928h1v1h-1zM571 915h1v1h-1zM576 927h1v1h-1zM581 923h1v1h-1zM586 922h1v1h-1zM591 920h1v1h-1zM596 927h1v1h-1zM601 926h1v1h-1zM606 923h1v1h-1zM611 926h1v1h-1zM616 927h1v1h-1zM621 920h1v1h-1zM625 925h1v1h-1zM630 924h1v1h-1zM635 924h1v1h-1zM640 925h1v1h-1zM645 923h1v1h-1zM649 925h1v1h-1zM655 929h1v1h-1zM665 930h1v1h-1zM670 929h1v1h-1zM675 925h1v1h-1zM680 926h1v1h-1zM684 929h1v1h-1zM690 924h1v1h-1zM694 915h1v1h-1zM700 922h1v1h-1zM704 924h1v1h-1zM710 927h1v1h-1zM715 925h1v1h-1zM720 925h1v1h-1zM725 932h1v1h-1zM729 921h1v1h-1zM735 931h1v1h-1zM739 922h1v1h-1zM745 925h1v1h-1zM750 931h1v1h-1zM755 929h1v1h-1zM760 928h1v1h-1zM764 932h1v1h-1zM770 930h1v1h-1zM774 928h1v1h-1zM778 932h1v1h-1zM784 935h1v1h-1zM788 928h1v1h-1zM794 928h1v1h-1zM799 930h1v1h-1zM804 938h1v1h-1zM809 928h1v1h-1zM814 930h1v1h-1zM819 930h1v1h-1zM823 913h1v1h-1zM829 935h1v1h-1zM833 931h1v1h-1zM839 927h1v1h-1zM843 932h1v1h-1zM849 934h1v1h-1zM853 929h1v1h-1zM858 929h1v1h-1zM864 935h1v1h-1zM868 938h1v1h-1zM874 920h1v1h-1zM878 906h1v1h-1zM884 918h1v1h-1zM889 925h1v1h-1zM894 928h1v1h-1zM899 932h1v1h-1zM903 928h1v1h-1zM909 930h1v1h-1zM914 935h1v1h-1zM919 928h1v1h-1zM924 925h1v1h-1zM928 928h1v1h-1zM933 931h1v1h-1zM938 932h1v1h-1zM943 936h1v1h-1zM948 928h1v1h-1zM953 923h1v1h-1zM958 938h1v1h-1zM963 929h1v1h-1zM968 935h1v1h-1zM973 936h1v1h-1zM978 934h1v1h-1zM983 928h1v1h-1zM988 936h1v1h-1zM993 935h1v1h-1zM997 936h1v1h-1zM1003 928h1v1h-1zM1007 918h1v1h-1zM1013 935h1v1h-1zM1018 939h1v1h-1zM1023 939h1v1h-1zM1028 933h1v1h-1zM1032 923h1v1h-1zM1038 929h1v1h-1zM1043 941h1v1h-1zM1048 936h1v1h-1z" fill="#d0001c"/>
<path d="M255 752h4v4h-4zM569 757h4v4h-4zM509 774h4v4h-4zM395 789h4v4h-4zM405 794h4v4h-4zM524 793h4v4h-4zM484 798h4v4h-4zM539 815h4v4h-4zM420 822h4v4h-4zM390 845h4v4h-4zM335 850h4v4h-4zM445 853h4v4h-4zM584 845h4v4h-4zM589 851h4v4h-4zM604 852h4v4h-4zM469 861h4v4h-4zM276 864h4v4h-4zM455 866h4v4h-4zM320 874h4v4h-4zM529 870h4v4h-4zM544 870h4v4h-4zM609 871h4v4h-4zM400 878h4v4h-4zM514 880h4v4h-4zM628 882h4v4h-4zM360 890h4v4h-4zM425 891h4v4h-4zM260 898h4v4h-4zM330 900h4v4h-4zM350 905h4v4h-4zM460 903h4v4h-4zM474 910h4v4h-4zM599 910h4v4h-4zM296 916h4v4h-4zM311 915h4v4h-4zM430 916h4v4h-4zM633 915h4v4h-4zM638 913h4v4h-4zM340 921h4v4h-4zM549 921h4v4h-4zM325 925h4v4h-4zM415 923h4v4h-4zM365 927h4v4h-4zM504 927h4v4h-4zM281 929h4v4h-4zM370 930h4v4h-4zM380 930h4v4h-4zM619 931h4v4h-4zM291 934h4v4h-4zM489 942h4v4h-4zM464 950h4v4h-4zM306 955h4v4h-4zM315 955h4v4h-4zM564 953h4v4h-4zM499 958h4v4h-4zM623 960h4v4h-4zM479 965h4v4h-4zM559 966h4v4h-4zM286 971h4v4h-4zM410 970h4v4h-4zM574 978h4v4h-4zM494 986h4v4h-4zM519 985h4v4h-4zM594 985h4v4h-4zM693 743h4v4h-4zM648 754h4v4h-4zM872 764h4v4h-4zM1031 778h4v4h-4zM678 786h4v4h-4zM1011 810h4v4h-4zM922 815h4v4h-4zM892 822h4v4h-4zM941 825h4v4h-4zM981 830h4v4h-4zM1001 841h4v4h-4zM658 845h4v4h-4zM797 854h4v4h-4zM917 855h4v4h-4zM1036 856h4v4h-4zM847 864h4v4h-4zM718 868h4v4h-4zM807 868h4v4h-4zM842 873h4v4h-4zM787 877h4v4h-4zM673 879h4v4h-4zM643 882h4v4h-4zM763 884h4v4h-4zM1006 882h4v4h-4zM882 887h4v4h-4zM912 888h4v4h-4zM976 895h4v4h-4zM738 899h4v4h-4zM996 899h4v4h-4zM792 902h4v4h-4zM902 909h4v4h-4zM832 911h4v4h-4zM946 911h4v4h-4zM822 916h4v4h-4zM877 916h4v4h-4zM768 922h4v4h-4zM698 924h4v4h-4zM961 926h4v4h-4zM723 930h4v4h-4zM837 932h4v4h-4zM703 936h4v4h-4zM862 937h4v4h-4zM986 939h4v4h-4zM663 943h4v4h-4zM733 942h4v4h-4zM926 942h4v4h-4zM867 948h4v4h-4zM683 955h4v4h-4zM688 955h4v4h-4zM748 953h4v4h-4zM773 952h4v4h-4zM812 956h4v4h-4zM728 960h4v4h-4zM931 960h4v4h-4zM817 969h4v4h-4zM1026 969h4v4h-4zM753 974h4v4h-4zM777 973h4v4h-4zM887 982h4v4h-4zM743 986h4v4h-4zM250 990h4v4h-4zM355 990h4v4h-4zM579 998h4v4h-4zM614 1001h4v4h-4zM435 1013h4v4h-4zM345 1019h4v4h-4zM385 1022h4v4h-4zM534 1022h4v4h-4zM375 1044h4v4h-4zM554 1046h4v4h-4zM440 1065h4v4h-4zM450 1077h4v4h-4zM301 1095h4v4h-4zM936 990h4v4h-4zM827 999h4v4h-4zM857 1001h4v4h-4zM758 1005h4v4h-4zM782 1006h4v4h-4zM668 1010h4v4h-4zM708 1011h4v4h-4zM897 1008h4v4h-4zM907 1008h4v4h-4zM991 1011h4v4h-4zM713 1028h4v4h-4zM653 1036h4v4h-4zM802 1044h4v4h-4zM966 1042h4v4h-4zM971 1051h4v4h-4zM852 1057h4v4h-4zM951 1095h4v4h-4zM956 1125h4v4h-4zM1021 1122h4v4h-4zM1016 1162h4v4h-4zM1046 949h4v4h-4zM1041 954h4v4h-4z" fill="#005000"/>
</g>
<g shape-rendering="auto">
<defs><linearGradient id="tg" x1="0" y1="0" x2="1" y2="0"><stop offset="0" stop-color="#ebf1fb"/><stop offset="0.55" stop-color="#f1f2f5"/><stop offset="0.7" stop-color="#f3f3f3"/><stop offset="1" stop-color="#f3f3f3"/></linearGradient></defs><rect x="0" y="0" width="1885" height="26.5" fill="url(#tg)"/>
<rect x="0" y="26.5" width="1885" height="20.5" fill="#fff"/><rect x="0" y="46" width="1885" height="1" fill="#e6e6e6"/>
<rect x="0" y="47" width="1885" height="1" fill="#a0a0a0"/>
<rect x="0" y="48" width="1285" height="23" fill="#f0f0f0"/>
<rect x="1284" y="48" width="1" height="23" fill="#a0a0a0"/>
<rect x="0" y="71" width="1885" height="1" fill="#a0a0a0"/>
<rect x="0" y="72" width="1885" height="1" fill="#696969"/>
<rect x="0" y="73" width="1" height="1111" fill="#696969"/>
<rect x="7" y="3" width="16" height="9" fill="#0000e0"/><rect x="7" y="11.5" width="16" height="7.5" fill="#000"/>
<path d="M14 3h3l3 8.5h-10z" fill="#000"/><path d="M9 19h2.5l0.5-1h-3zM18 19h2.5l0.5-1h-3zM13.5 19h2l0.5-1h-3z" fill="#fff"/>
<path d="M12 5.3h6M15 4v3M8.5 12.4h5.5M11.1 11v3M16.5 12.2h5.5M19.4 11v3" stroke="#fff" stroke-width="1.5"/>
<path d="M11.6 11.5v-5l3 5v-5M14.9 11.5v2M10.5 12.8h-3v4M7.5 14.8h2M18.6 13.6h-2.8v3.8h2.8" stroke="#0ff" fill="none" stroke-width="1"/>
<text x="29.0" y="16.0" font-size="12" textLength="891.0" lengthAdjust="spacingAndGlyphs">StarCurve 7.36   2025/2  (C) L. Pagel - ----  C:\Users\Hauke\Pictures\Zu Sicherndes\Lichtkurven\C-Munipack-2.0\Projects\CMa V0438\CMa GaiaDR3299362419852814835</text>
<text x="6.3" y="40.5" font-size="12" textLength="17.8" lengthAdjust="spacingAndGlyphs">File</text>
<text x="38.2" y="40.5" font-size="12" textLength="55.4" lengthAdjust="spacingAndGlyphs">Bearbeiten</text>
<text x="108.0" y="40.5" font-size="12" textLength="24.6" lengthAdjust="spacingAndGlyphs">View</text>
<text x="147.4" y="40.5" font-size="12" textLength="95.5" lengthAdjust="spacingAndGlyphs">== Light curve ==</text>
<text x="258.0" y="40.5" font-size="12" textLength="61.4" lengthAdjust="spacingAndGlyphs">DataMining</text>
<text x="334.2" y="40.5" font-size="12" textLength="116.2" lengthAdjust="spacingAndGlyphs">Convolution (Faltung)</text>
<text x="465.3" y="40.5" font-size="12" textLength="83.2" lengthAdjust="spacingAndGlyphs">O - C - Diagram</text>
<text x="563.3" y="40.5" font-size="12" textLength="27.5" lengthAdjust="spacingAndGlyphs">Tools</text>
<text x="605.3" y="40.5" font-size="12" textLength="37.5" lengthAdjust="spacingAndGlyphs">Fenster</text>
<text x="656.9" y="40.5" font-size="12" textLength="4.8" lengthAdjust="spacingAndGlyphs">?</text>
<path d="M2 52h1M3 53h1M2 56h1M3 57h1M2 60h1M3 61h1M2 64h1M3 65h1" stroke="#b0b0b0"/>
<rect x="68" y="51" width="1" height="18" fill="#a0a0a0"/>
<rect x="104" y="51" width="1" height="18" fill="#a0a0a0"/>
<rect x="140" y="51" width="1" height="18" fill="#a0a0a0"/>
<rect x="176" y="51" width="1" height="18" fill="#a0a0a0"/>
<rect x="272" y="51" width="1" height="18" fill="#a0a0a0"/>
<rect x="338" y="51" width="1" height="18" fill="#a0a0a0"/>
<rect x="584" y="51" width="1" height="18" fill="#a0a0a0"/>
<rect x="620" y="51" width="1" height="18" fill="#a0a0a0"/>
<rect x="686" y="51" width="1" height="18" fill="#a0a0a0"/>
<rect x="782" y="51" width="1" height="18" fill="#a0a0a0"/>
<rect x="848" y="51" width="1" height="18" fill="#a0a0a0"/>
<rect x="914" y="51" width="1" height="18" fill="#a0a0a0"/>
<rect x="980" y="51" width="1" height="18" fill="#a0a0a0"/>
<path d="M11 60h13l-4 5h-6z" fill="#fff" stroke="#000"/><path d="M15 60h8l-3.5 4.5h-4.5z" fill="#808000"/><rect x="15" y="57" width="4" height="3" fill="#ff0"/><path d="M14 57h6" stroke="#000"/><path d="M17 54c2-2 5-2 6 1M23 55l-1 -2M23 55l-2 1" stroke="#000" fill="none"/>
<text x="25.0" y="66.5" font-size="9" textLength="7.5" lengthAdjust="spacingAndGlyphs" font-weight="bold">M</text>
<rect x="41" y="52" width="19" height="15" fill="#808000"/><rect x="43" y="53" width="15" height="7" fill="#f0f0f0"/><rect x="43" y="61" width="15" height="5" fill="#000"/><rect x="49" y="62" width="4" height="3" fill="#fff"/>
<path d="M82 53h9l-1 5h-9z" fill="#fff" stroke="#000"/><path d="M84 55h5M83.5 57h5" stroke="#000" stroke-width="0.8"/><path d="M79 58.5h13v4h-13z" fill="#fff" stroke="#000"/><path d="M82 62.5h8" stroke="#ff0" stroke-width="1.4"/><path d="M78.5 64.5h14v2h-14z" fill="#fff" stroke="#000"/>
<text x="117.5" y="65.5" font-size="16" textLength="10.0" lengthAdjust="spacingAndGlyphs" font-weight="bold" fill="#ff0" stroke="#000" stroke-width="1.1" paint-order="stroke">?</text>
<rect x="147" y="52" width="23" height="15" fill="#00f"/><path d="M151 56.5h18" stroke="#ff0" stroke-width="1"/><path d="M162 53l6 3.5l-6 3.5z" fill="#ff0"/><path d="M156.5 61l1.5 5.5M161 61l-2 5.5" stroke="#ff0" fill="none"/>
<text x="183.9" y="64.6" font-size="12.6" textLength="19.0" lengthAdjust="spacingAndGlyphs" font-weight="bold" fill="#a0a0a0">BR</text>
<text x="214.0" y="65.6" font-size="15.4" textLength="5.6" lengthAdjust="spacingAndGlyphs" font-weight="bold" stroke="#000" stroke-width="0.6">E</text>
<text x="225.6" y="66.0" font-size="15" textLength="9.0" lengthAdjust="spacingAndGlyphs" font-weight="bold">+</text>
<path d="M219.5 52.5H229M219.5 66.5H229" stroke="#f00"/>
<text x="244.0" y="65.6" font-size="15.4" textLength="5.6" lengthAdjust="spacingAndGlyphs" font-weight="bold" stroke="#000" stroke-width="0.6">E</text>
<rect x="256" y="60" width="7" height="2" fill="#000"/>
<path d="M249.5 52.5H259M249.5 66.5H259" stroke="#f00"/>
<text x="281.0" y="65.6" font-size="17.5" textLength="7.0" lengthAdjust="spacingAndGlyphs" font-weight="bold" stroke="#000" stroke-width="0.5">P</text>
<text x="288.5" y="65.0" font-size="13" textLength="7.5" lengthAdjust="spacingAndGlyphs" font-weight="bold">+</text>
<path d="M285.5 52.5H295M285.5 66.5H295" stroke="#f00"/>
<text x="309.8" y="65.6" font-size="17.5" textLength="7.0" lengthAdjust="spacingAndGlyphs" font-weight="bold" stroke="#000" stroke-width="0.5">P</text>
<rect x="321" y="58" width="4" height="2" fill="#000"/>
<path d="M315.5 52.5H325M315.5 66.5H325" stroke="#f00"/>
<text x="346.0" y="65.6" font-size="17.5" textLength="7.0" lengthAdjust="spacingAndGlyphs" font-weight="bold" stroke="#000" stroke-width="0.5">P</text>
<text x="353.0" y="65.0" font-size="13" textLength="14.5" lengthAdjust="spacingAndGlyphs" font-weight="bold">++</text>
<path d="M351.5 52.5H361M351.5 66.5H361" stroke="#f00"/>
<text x="376.0" y="65.6" font-size="17.5" textLength="7.0" lengthAdjust="spacingAndGlyphs" font-weight="bold" stroke="#000" stroke-width="0.5">P</text>
<rect x="386" y="58" width="5" height="2" fill="#000"/><rect x="392" y="58" width="5" height="2" fill="#000"/>
<path d="M381.5 52.5H391M381.5 66.5H391" stroke="#f00"/>
<path d="M406.5 54V66.5M404.5 57l2-3l2 3" stroke="#000" fill="none"/>
<text x="409.3" y="61.1" font-size="12" textLength="6.0" lengthAdjust="spacingAndGlyphs">2</text>
<text x="421.7" y="64.0" font-size="12" textLength="6.5" lengthAdjust="spacingAndGlyphs" font-weight="bold">+</text>
<path d="M436.5 54V66.5M434.5 57l2-3l2 3" stroke="#000" fill="none"/>
<text x="439.3" y="61.1" font-size="12" textLength="6.0" lengthAdjust="spacingAndGlyphs">2</text>
<rect x="450.5" y="59" width="6" height="2" fill="#000"/>
<text x="466.0" y="65.6" font-size="17.5" textLength="18.0" lengthAdjust="spacingAndGlyphs" font-weight="bold" stroke="#000" stroke-width="0.5">P/2</text>
<path d="M471.5 52.5H481M471.5 66.5H481" stroke="#f00"/>
<text x="496.0" y="65.6" font-size="17.5" textLength="21.0" lengthAdjust="spacingAndGlyphs" font-weight="bold" stroke="#000" stroke-width="0.5">P•2</text>
<path d="M501 52.5h2M509 52.5h2M501 66.5h2M509 66.5h2" stroke="#f00"/>
<text x="526.0" y="65.6" font-size="17.5" textLength="21.0" lengthAdjust="spacingAndGlyphs" font-weight="bold" stroke="#000" stroke-width="0.5">P/3</text>
<path d="M531.5 52.5H541M531.5 66.5H541" stroke="#f00"/>
<text x="556.0" y="65.6" font-size="17.5" textLength="21.0" lengthAdjust="spacingAndGlyphs" font-weight="bold" stroke="#000" stroke-width="0.5">P•3</text>
<path d="M561 52.5h2M569 52.5h2M561 66.5h2M569 66.5h2" stroke="#f00"/>
<text x="596.0" y="65.6" font-size="16.3" textLength="18.2" lengthAdjust="spacingAndGlyphs" font-weight="bold" fill="#a0a0a0">BL:</text>
<text x="630.8" y="58.9" font-size="10.5" textLength="9.2" lengthAdjust="spacingAndGlyphs" stroke="#000" stroke-width="0.25">Ph</text>
<text x="660.8" y="58.9" font-size="10.5" textLength="9.2" lengthAdjust="spacingAndGlyphs" stroke="#000" stroke-width="0.25">Ph</text>
<text x="696.7" y="58.9" font-size="10.5" textLength="9.2" lengthAdjust="spacingAndGlyphs" stroke="#000" stroke-width="0.25">Ph</text>
<text x="726.7" y="58.9" font-size="10.5" textLength="9.2" lengthAdjust="spacingAndGlyphs" stroke="#000" stroke-width="0.25">Ph</text>
<text x="756.6" y="58.9" font-size="10.5" textLength="9.2" lengthAdjust="spacingAndGlyphs" stroke="#000" stroke-width="0.25">Ph</text>
<path d="M630 63h8M634 59v8" stroke="#000" stroke-width="2"/>
<path d="M640 63h8M644 59v8" stroke="#000" stroke-width="2"/>
<path d="M663 63H669" stroke="#000" stroke-width="2"/>
<path d="M671 63H677" stroke="#000" stroke-width="2"/>
<path d="M704 63h8M708 59v8" stroke="#000" stroke-width="2"/>
<path d="M734 63H740" stroke="#000" stroke-width="2"/>
<path d="M762 63H771" stroke="#f00" stroke-width="2"/><path d="M769 59L774 63L769 67z" fill="#f00"/>
<text x="788.6" y="58.9" font-size="10.5" textLength="14.7" lengthAdjust="spacingAndGlyphs" stroke="#000" stroke-width="0.25">PER</text>
<text x="818.6" y="58.9" font-size="10.5" textLength="14.7" lengthAdjust="spacingAndGlyphs" stroke="#000" stroke-width="0.25">PER</text>
<text x="854.7" y="58.9" font-size="10.5" textLength="14.7" lengthAdjust="spacingAndGlyphs" stroke="#000" stroke-width="0.25">PER</text>
<text x="884.6" y="58.9" font-size="10.5" textLength="14.7" lengthAdjust="spacingAndGlyphs" stroke="#000" stroke-width="0.25">PER</text>
<text x="920.7" y="58.9" font-size="10.5" textLength="14.7" lengthAdjust="spacingAndGlyphs" stroke="#000" stroke-width="0.25">PER</text>
<path d="M793 63h8M797 59v8" stroke="#000" stroke-width="2"/>
<path d="M803 63h8M807 59v8" stroke="#000" stroke-width="2"/>
<path d="M825 63H831" stroke="#000" stroke-width="2"/>
<path d="M833 63H839" stroke="#000" stroke-width="2"/>
<path d="M869 63h8M873 59v8" stroke="#000" stroke-width="2"/>
<path d="M899 63H905" stroke="#000" stroke-width="2"/>
<path d="M933 63H940" stroke="#f00" stroke-width="2"/><path d="M938 59L943 63L938 67z" fill="#f00"/>
<text x="951.0" y="61.6" font-size="12" textLength="23.0" lengthAdjust="spacingAndGlyphs" font-weight="bold" stroke="#000" stroke-width="0.4">ASAS</text>
<path d="M951 64.5h21" stroke="#800000" stroke-width="1"/><path d="M969 62l4 2.5l-4 2.5z" fill="#800000"/>
<text x="987.8" y="65.6" font-size="14.4" textLength="21.2" lengthAdjust="spacingAndGlyphs" font-weight="bold" fill="#00f" stroke="#00f" stroke-width="0.5">P=2B</text>
<text x="1018.0" y="65.6" font-size="14.4" textLength="21.0" lengthAdjust="spacingAndGlyphs" font-weight="bold" fill="#00f" stroke="#00f" stroke-width="0.5">P=1B</text>
<text x="1049.0" y="65.6" font-size="14.4" textLength="19.2" lengthAdjust="spacingAndGlyphs" font-weight="bold" fill="#00f" stroke="#00f" stroke-width="0.5">F+1</text>
<text x="1079.8" y="65.6" font-size="14.4" textLength="18.5" lengthAdjust="spacingAndGlyphs" font-weight="bold" fill="#00f" stroke="#00f" stroke-width="0.5">F-1</text>
<circle cx="1111.5" cy="55.5" r="2.4" fill="#000080"/><circle cx="1111.5" cy="63" r="2.4" fill="#000080"/><circle cx="1125" cy="59.5" r="2.6" fill="#000080"/>
<path d="M1114 59.5h5" stroke="#f00" stroke-width="2.5"/><path d="M1117.5 55.5l5 4l-5 4z" fill="#f00"/>
<path d="M1138 63l10.5-8l10.5 9.5" stroke="#ff0" fill="none" stroke-width="1.7"/><path d="M1147.7 58V67" stroke="#f00" stroke-width="2"/>
<path d="M1170 54.5l8.5 10.5l10.5-9" stroke="#ff0" fill="none" stroke-width="1.7"/><path d="M1178 52V62" stroke="#f00" stroke-width="2"/>
<text x="1198.5" y="64.7" font-size="14" textLength="21.4" lengthAdjust="spacingAndGlyphs" font-weight="bold" fill="#00f" stroke="#00f" stroke-width="0.5">Foff</text>
<text x="1229.0" y="64.7" font-size="14" textLength="20.0" lengthAdjust="spacingAndGlyphs" font-weight="bold" fill="#00f" stroke="#00f" stroke-width="0.5">Fon</text>
<text x="1258.0" y="58.9" font-size="9" textLength="20.0" lengthAdjust="spacingAndGlyphs" fill="#800000" style="font-family:'Liberation Serif',serif" stroke="#800000" stroke-width="0.3">auto</text>
<text x="1256.8" y="65.8" font-size="9" textLength="23.0" lengthAdjust="spacingAndGlyphs" fill="#800000" style="font-family:'Liberation Serif',serif" stroke="#800000" stroke-width="0.3">error</text>
</g>
</svg>
</body></html>
